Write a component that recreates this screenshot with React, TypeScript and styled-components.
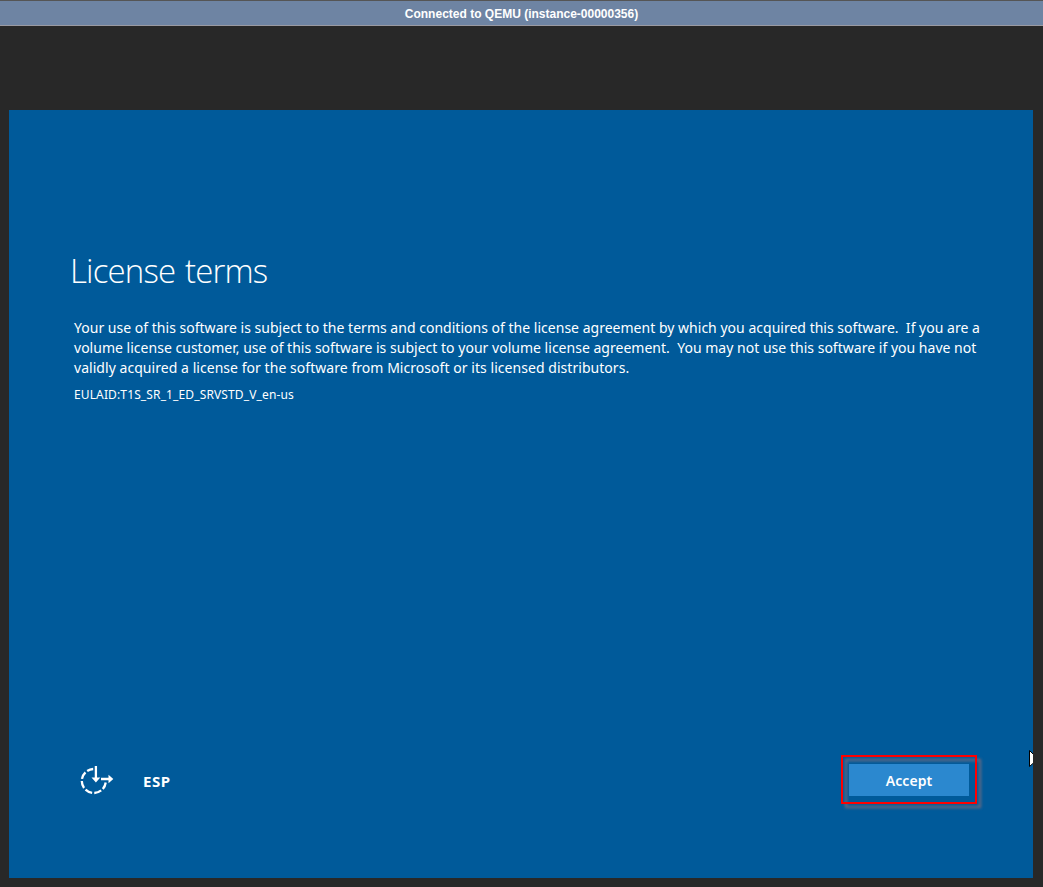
import React from 'react';
import styled, { createGlobalStyle } from 'styled-components';

const GlobalStyle = createGlobalStyle`
  * { box-sizing: border-box; }
  body { margin: 0; background: #282828; }
`;

const Viewer = styled.div`
  width: 1043px;
  height: 887px;
  display: flex;
  flex-direction: column;
  background: #282828;
  overflow: hidden;
`;

const StatusBar = styled.header`
  height: 26px;
  flex: none;
  display: flex;
  align-items: center;
  justify-content: center;
  background: #6e84a3;
  border-top: 1px solid #555;
  border-bottom: 1px solid #9a9aa2;
  color: #fff;
  font: bold 12px/24px 'Liberation Sans', Arial, sans-serif;
  padding-top: 2px;
`;

const Screen = styled.main`
  position: relative;
  width: 1024px;
  height: 768px;
  margin: 84px 0 0 9px;
  padding: 137px 40px 82px 61px;
  flex: none;
  display: flex;
  flex-direction: column;
  background: #005a9a;
  color: #fff;
  font-family: 'Noto Sans', 'Open Sans', sans-serif;
  overflow: hidden;
`;

const Title = styled.h1`
  margin: 0 0 23px;
  font: 300 33px/48px 'Open Sans', sans-serif;
  letter-spacing: -0.85px;
  word-spacing: 2px;
  white-space: nowrap;
`;

const Terms = styled.div`
  padding-left: 4px;
`;

const Line = styled.div<{ $spacing: number }>`
  font-size: 14px;
  line-height: 20px;
  letter-spacing: ${(p) => p.$spacing}px;
  white-space: pre;
`;

const EulaId = styled.div`
  margin-top: 7px;
  font-size: 12px;
  line-height: 20px;
  letter-spacing: 0.13px;
`;

const Footer = styled.footer`
  margin-top: auto;
  display: flex;
  align-items: center;
  height: 32px;
  padding: 0 24px 0 9px;
`;

const Brand = styled.span`
  flex: 1;
  margin-left: 29px;
  padding-top: 2px;
  font: 700 15px/20px 'Noto Sans', sans-serif;
  letter-spacing: 0.5px;
`;

const AcceptButton = styled.button`
  position: relative;
  width: 120px;
  height: 32px;
  padding: 2px 0 0;
  border: 0;
  background: #2b88cf;
  color: #fff;
  font: 600 14px/30px 'Noto Sans', sans-serif;
  letter-spacing: 0.1px;
`;

const Highlight = styled.span`
  position: absolute;
  left: -8px;
  top: -9px;
  width: 136px;
  height: 49px;
  border: 2px solid #f00;
  filter: drop-shadow(4px 4px 1.5px #776b7c);
  pointer-events: none;
`;

const Pointer = styled.svg`
  position: absolute;
  right: 0;
  top: 640px;
`;

const terms = [
  { text: 'Your use of this software is subject to the terms and conditions of the license agreement by which you acquired this software.  If you are a', spacing: 0.015 },
  { text: 'volume license customer, use of this software is subject to your volume license agreement.  You may not use this software if you have not', spacing: 0.018 },
  { text: 'validly acquired a license for the software from Microsoft or its licensed distributors.', spacing: 0.045 },
];

const EaseOfAccessIcon = () => (
  <svg width="35" height="32" viewBox="0 0 35 32" fill="none" stroke="#fff" strokeWidth="2.3">
    <path d="M14.2 5A12 12 0 1 0 26.7 18.5" strokeDasharray="7.4 2.2" strokeDashoffset="1" />
    <path d="M16.9 2v14M22 15h8" />
    <path d="M12.5 13.5h8.8l-4.4 5zM29.5 10.8v8.4l4.8-4.2z" fill="#fff" stroke="none" />
  </svg>
);

export default function App() {
  return (
    <>
      <GlobalStyle />
      <Viewer>
        <StatusBar>Connected to QEMU (instance-00000356)</StatusBar>
        <Screen>
          <Title>License terms</Title>
          <Terms>
            {terms.map((t) => (
              <Line key={t.text} $spacing={t.spacing}>{t.text}</Line>
            ))}
            <EulaId>EULAID:T1S_SR_1_ED_SRVSTD_V_en-us</EulaId>
          </Terms>
          <Footer>
            <EaseOfAccessIcon />
            <Brand>ESP</Brand>
            <AcceptButton>
              Accept
              <Highlight />
            </AcceptButton>
          </Footer>
          <Pointer width="4" height="18" viewBox="0 0 4 18">
            <path d="M.5 .5v16L5 12.5V5z" fill="#fff" stroke="#000" />
          </Pointer>
        </Screen>
      </Viewer>
    </>
  );
}
